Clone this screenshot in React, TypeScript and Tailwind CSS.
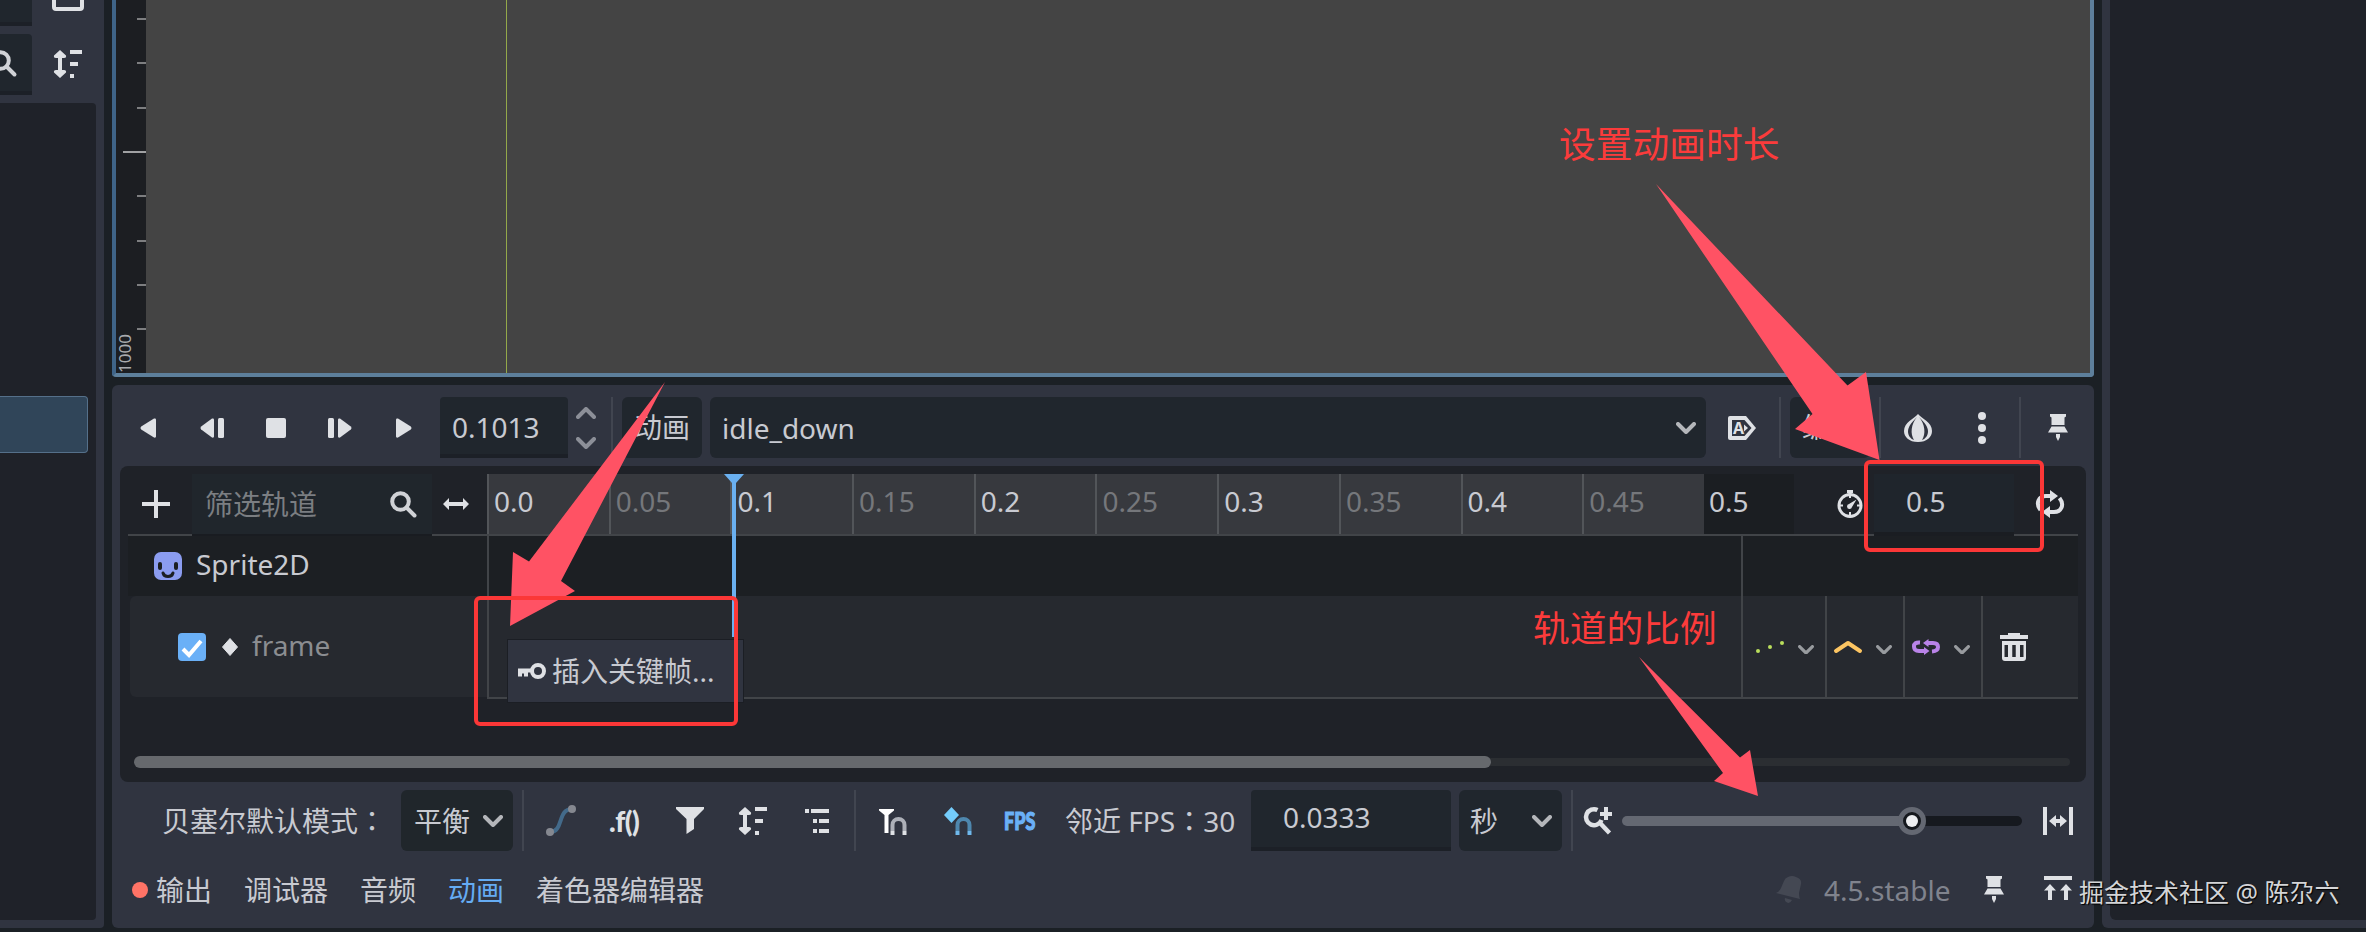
import type { ReactNode } from 'react';

const TICKS = ['0.0', '0.05', '0.1', '0.15', '0.2', '0.25', '0.3', '0.35', '0.4', '0.45'];
const RULER_GAPS = [19, 63, 108, 152, 196, 241, 285, 329];
const ICON = '#dfe1e5';

function Icon({ w, h, className = '', children }: { w: number; h: number; className?: string; children: ReactNode }) {
  return (
    <svg width={w} height={h} viewBox={`0 0 ${w} ${h}`} fill={ICON} className={`block shrink-0 overflow-visible ${className}`}>
      {children}
    </svg>
  );
}

function Chevron({ w = 20, color = '#b4b6ba', className = '', up = false }: { w?: number; color?: string; className?: string; up?: boolean }) {
  return (
    <svg width={w} height={w * 0.6} viewBox="0 0 20 12" fill="none" stroke={color} strokeWidth="4" strokeLinecap="round" strokeLinejoin="round" className={`block shrink-0 ${className}`}>
      <path d={up ? 'M2 10 10 2l8 8' : 'M2 2l8 8 8-8'} />
    </svg>
  );
}

function Separator({ className = '' }: { className?: string }) {
  return <div className={`w-0.5 self-stretch shrink-0 bg-[#414550] ${className}`} />;
}

// Full-width colon, centred in its cell
function Colon() {
  return <span lang="zh-TW" className="font-['Noto_Sans_CJK_TC',sans-serif]">：</span>;
}

function SearchIcon({ className = '' }: { className?: string }) {
  return (
    <Icon w={27} h={27} className={className}>
      <g fill="none" stroke="#d0d2d6" strokeWidth="4" strokeLinecap="round">
        <circle cx="10.5" cy="10.5" r="8.3" />
        <path d="M17 17l7.5 7.5" />
      </g>
    </Icon>
  );
}

function SortIcon({ className = '' }: { className?: string }) {
  return (
    <Icon w={28} h={28} className={className}>
      <path d="M6 0 12 5.5Q12.6 8 10 8H8v12h2q2.6 0 2 2.5L6 28 0 22.500q-.6-2.500 2-2.500H4V8H2Q-.6 8 0 5.500z" />
      <path d="M16 0h12v4H16zM16 12h8v4h-8zM16 24h4v4h-4z" />
    </Icon>
  );
}

function PinIcon({ className = '' }: { className?: string }) {
  return (
    <Icon w={20} h={27} className={className}>
      <path d="M2 0h16v2.500l-1.500 1V11h-13V3.500L2 2.500zM3.500 12.500h13L20 18.500H0zM8 20h4v3l-2 4-2-4z" />
    </Icon>
  );
}

function LeftDock() {
  return (
    <div className="relative flex h-[928px] w-[104px] shrink-0 flex-col rounded-br bg-[#303440]">
      <div className="flex h-[26px] items-start">
        <div className="h-[26px] w-8 border-b-4 border-[#1c2027] bg-[#20262d]" />
        <Icon w={32} h={12} className="ml-5">
          <path d="M2-10V7q0 2 2 2h24q2 0 2-2V-10" fill="none" stroke={ICON} strokeWidth="4" />
        </Icon>
      </div>
      <div className="mt-2 flex h-[61px] items-center">
        <div className="flex h-[61px] w-8 items-center overflow-hidden rounded-tr border-b-4 border-[#1c2027] bg-[#20262d]">
          <SearchIcon className="-ml-[10px] mt-0.5" />
        </div>
        <SortIcon className="ml-[22px] -mt-px" />
      </div>
      <div className="mt-2 h-[817px] w-24 rounded-r bg-[#1f2229] pt-[293px]">
        <div className="h-[57px] w-[88px] rounded-r border border-l-0 border-[#55708a] bg-[#304559]" />
      </div>
    </div>
  );
}

function Viewport() {
  return (
    <div className="flex h-[377px] rounded-b-sm border-x-4 border-b-4 border-[#5d7f9b] border-l-[#3f6488]">
      <div className="relative w-[30px] shrink-0 bg-[#1c1e22]">
        {RULER_GAPS.map(y => (
          <div key={y} className={`absolute right-0 h-0.5 ${y === 152 ? 'w-[23px] bg-[#a0a1a3]' : 'w-[9px] bg-[#7d7e80]'}`} style={{ top: y - 1 }} />
        ))}
        <span className="absolute bottom-0 left-0 [writing-mode:vertical-rl] rotate-180 text-[17px] leading-[18px] text-[#a9abae]">1000</span>
      </div>
      <div className="flex-1 bg-[#444444] pl-[360px]">
        <div className="h-[373px] w-px bg-[#94a94a]" />
      </div>
    </div>
  );
}

function PlaybackBar() {
  return (
    <div className="flex h-[61px] items-center pl-7">
      <Icon w={16} h={20}><path d="M16 1.500V18.500Q16 20 14 19.500L1.200 11.500Q-.4 10 1.200 8.500L14 .5Q16 0 16 1.500z" /></Icon>
      <Icon w={24} h={20} className="ml-11"><path d="M14 1.500V18.500Q14 20 12 19.500L1.200 11.500Q-.4 10 1.200 8.500L12 .5Q14 0 14 1.500z" /><rect x="18" width="6" height="20" rx="1.500" /></Icon>
      <Icon w={20} h={20} className="ml-[42px]"><rect width="20" height="20" rx="2" /></Icon>
      <Icon w={24} h={20} className="ml-[42px]"><rect width="6" height="20" rx="1.500" /><path d="M10 1.500V18.500Q10 20 12 19.500L22.800 11.500Q24.400 10 22.800 8.500L12 .5Q10 0 10 1.500z" /></Icon>
      <Icon w={16} h={20} className="ml-11"><path d="M0 1.500V18.500Q0 20 2 19.500L14.800 11.500Q16.400 10 14.800 8.500L2 .5Q0 0 0 1.500z" /></Icon>
      <div className="ml-7 h-[61px] w-32 shrink-0 rounded-t border-b-4 border-[#1c2027] bg-[#20262d] pl-3 leading-[61px]">0.1013</div>
      <div className="ml-2 flex flex-col gap-[18px]">
        <Chevron up color="#8c8f98" />
        <Chevron color="#8c8f98" />
      </div>
      <Separator className="ml-[15px]" />
      <div className="ml-[9px] h-[61px] w-20 shrink-0 rounded-md bg-[#20262d] text-center leading-[61px]">动画</div>
      <div className="ml-2 flex h-[61px] w-[996px] shrink-0 items-center justify-between rounded-md bg-[#20262d] pl-3 pr-2.5">
        idle_down
        <Chevron />
      </div>
      <div className="relative ml-[22px] h-6 w-7 shrink-0">
        <Icon w={28} h={24}>
          <path d="M2 0H18L28 12 18 24H2Q0 24 0 22V2Q0 0 2 0z" />
          <path d="M4 4H16.500L23.500 12 16.500 20H4z" fill="#303440" />
          <path d="M16 8.500 20 12l-4 3.500z" />
        </Icon>
        <span className="absolute left-[5px] top-[4px] text-[16px] font-bold leading-4 text-[#dfe1e5]">A</span>
      </div>
      <Separator className="ml-[23px]" />
      <div className="ml-[9px] h-[61px] w-20 shrink-0 rounded-md bg-[#20262d] text-center leading-[61px]">编辑</div>
      <Separator className="ml-[9px]" />
      <Icon w={28} h={28} className="ml-[23px]">
        <path d="M14 0C18 5 28 8 28 17 28 23 23 28 14 28S0 23 0 17C0 8 10 5 14 0z" />
        <path d="M13 3C7 9 4 13 4 17.500 4 22 7 25 10 26 6 20 7 10 13 3zM15 3c6 6 9 10 9 14.500C24 22 21 25 18 26 22 20 21 10 15 3z" fill="#303440" />
      </Icon>
      <Icon w={8} h={32} className="ml-[46px]"><circle cx="4" cy="4" r="4" /><circle cx="4" cy="16" r="4" /><circle cx="4" cy="28" r="4" /></Icon>
      <Separator className="ml-[33px]" />
      <PinIcon className="ml-[27px]" />
    </div>
  );
}

function TimelineHeader() {
  return (
    <div className="flex h-[62px] items-start border-b-2 border-[#414448]">
      <div className="flex h-[60px] w-[359px] shrink-0 items-center pl-3.5">
        <Icon w={28} h={28}><path d="M12 0h4v12h12v4H16v12h-4V16H0v-4h12z" /></Icon>
        <div className="relative top-px ml-[22px] flex h-[62px] w-60 items-center justify-between border-b-2 border-[#191c21] bg-[#20262c] pl-[13px] pr-[15px] text-[#7b7e82]">
          筛选轨道
          <SearchIcon />
        </div>
        <Icon w={26} h={12} className="ml-[11px]"><path d="M6 0v4h14V0l6 6-6 6V8H6v4L0 6z" /></Icon>
      </div>
      <div className="grid h-[60px] w-[1217px] shrink-0 grid-cols-10 bg-[#37393e]">
        {TICKS.map((t, i) => (
          <div key={t} className={`border-l-2 border-[#525559] pl-[5px] leading-[55px] ${i % 2 ? 'text-[#75777b]' : ''}`}>{t}</div>
        ))}
      </div>
      <div className="h-[60px] w-[90px] shrink-0 bg-[#1b1e22] pl-[5px] leading-[55px]">0.5</div>
      <Icon w={26} h={28} className="ml-[43px] mt-4">
        <circle cx="13" cy="15.500" r="11" fill="none" stroke={ICON} strokeWidth="3" />
        <path d="M10 0h6v3h-6zM11.500 2h3v3h-3zM19.500 9.500 15 17a2.500 2.500 0 1 1-3-3zM2 14.500h4v2H2zM20 14.500h4v2h-4zM12 22h2v4h-2zM12 5h2v3h-2z" />
      </Icon>
      <div className="ml-[11px] h-[62px] w-[140px] shrink-0 border-b-4 border-[#1a1d22] bg-[#1f252c] pl-8 leading-[55px]">0.5</div>
      <Icon w={28} h={28} className="ml-[22px] mt-4">
        <g fill="none" stroke={ICON} strokeWidth="4">
          <path d="M4.500 20C-1 13 3 6 10 6h5" />
          <path d="M23.500 8C29 15 25 22 18 22h-5" />
        </g>
        <path d="M14 0 22 6l-8 6zM14 16v12l-8-6z" />
      </Icon>
    </div>
  );
}

function TrackRows() {
  const cell = 'flex items-center border-l-2 border-[#414448]';
  return (
    <>
      <div className="flex h-[60px] bg-[#1c1f23]">
        <div className="flex w-[359px] shrink-0 items-center pl-[26px]">
          <Icon w={28} h={28}>
            <rect width="28" height="28" rx="7" fill="#8b9cf0" />
            <rect x="4" y="10" width="4" height="8" rx="2" fill="#1c1f23" />
            <rect x="20" y="10" width="4" height="8" rx="2" fill="#1c1f23" />
            <path d="M9 21q1 3.500 5 3.500t5-3.500" fill="none" stroke="#1c1f23" strokeWidth="3" strokeLinecap="round" />
          </Icon>
          <span className="ml-3.5 leading-none -mt-[5px]">Sprite2D</span>
        </div>
        <div className="w-[1254px] shrink-0 border-l-2 border-[#414448]" />
        <div className="border-l-2 border-[#414448]" />
      </div>
      <div className="flex h-[103px]">
        <div className="ml-0.5 mb-0.5 flex w-[357px] shrink-0 items-center rounded-l-md bg-[#26292f] pl-12">
          <Icon w={28} h={28}>
            <rect width="28" height="28" rx="4" fill="#6ab0f7" />
            <path d="M5 16l6 6L23 8" fill="none" stroke="#fff" strokeWidth="4" />
          </Icon>
          <Icon w={16} h={18} className="ml-4"><path d="M8 .5 15.500 9 8 17.500.5 9z" strokeWidth="1" stroke={ICON} strokeLinejoin="round" /></Icon>
          <span className="ml-3.5 -mt-1 leading-none text-[#8b8d91]">frame</span>
        </div>
        <div className="flex flex-1 border-b-2 border-[#414448] bg-[#26292f]">
          <div className="w-[1254px] shrink-0 border-l-2 border-[#414448]" />
          <div className={`${cell} w-[84px] pl-[13px]`}>
            <Icon w={24} h={12}><g fill="#bade5c"><circle cx="2" cy="10" r="2" /><circle cx="14" cy="6" r="2" /><circle cx="26" cy="2" r="2" /></g></Icon>
            <Chevron w={16} color="#989b9f" className="ml-[18px] mt-1.5" />
          </div>
          <div className={`${cell} w-[78px] pl-[7px]`}>
            <Icon w={28} h={12}><path d="M2 10 14 2l12 8" fill="none" stroke="#fcc562" strokeWidth="4" strokeLinecap="round" strokeLinejoin="round" /></Icon>
            <Chevron w={16} color="#989b9f" className="ml-3.5 mt-1.5" />
          </div>
          <div className={`${cell} w-[78px] pl-[7px]`}>
            <Icon w={28} h={16}>
              <g fill="none" stroke="#b983e8" strokeWidth="4">
                <path d="M8 3.500Q2 3 2 7.500T7 12h5" />
                <path d="M16 4h5q5 0 5 4t-6 4.500" />
              </g>
              <path d="M12 8l5.500 4-5.500 4zM16.500 0 11 4l5.500 4z" fill="#b983e8" />
            </Icon>
            <Chevron w={16} color="#989b9f" className="ml-3.5 mt-1.5" />
          </div>
          <div className={`${cell} flex-1 pl-[17px]`}>
            <Icon w={28} h={28}>
              <path d="M8 0h12v2h8v4H0V2h8z" />
              <path d="M2 8h24v17q0 3-3 3H5q-3 0-3-3zM4.500 12v12H8V12zM12.250 12v12h3.500V12zM20 12v12h3.500V12z" fillRule="evenodd" />
            </Icon>
          </div>
        </div>
      </div>
    </>
  );
}

function TrackEditor() {
  return (
    <div className="relative mx-2 mt-2 h-[316px] rounded-lg bg-[#1f2228] px-2 pt-2">
      <TimelineHeader />
      <TrackRows />
      <div className="ml-1.5 mr-2 mt-[57px] flex h-3 items-center">
        <div className="z-10 h-3 w-[1357px] rounded-full bg-[#66696d]" />
        <div className="-ml-1.5 h-2 flex-1 rounded-r-full bg-[#2b2e32]" />
      </div>

      {/* Playhead */}
      <Icon w={20} h={163} className="absolute left-[604px] top-2">
        <path d="M0 0h20l-8 9v154H8V9z" fill="#6ab0f0" />
      </Icon>

      {/* Context menu */}
      <div className="absolute left-[388px] top-[174px] flex h-[62px] w-[235px] items-center bg-[#303440] pl-2.5 shadow-[0_0_0_1px_#1b1e24]">
        <Icon w={28} h={16}>
          <circle cx="20" cy="8" r="6" fill="none" stroke={ICON} strokeWidth="4" />
          <path d="M0 6h13v4h-3v4H6v-3H4v3H0z" transform="translate(0 -.5)" />
        </Icon>
        <span className="ml-1.5 whitespace-nowrap">插入关键帧...</span>
      </div>
    </div>
  );
}

function OptionsBar() {
  return (
    <div className="mt-2 flex h-[61px] items-center whitespace-nowrap pl-[50px]">
      <span className="w-[239px] shrink-0">贝塞尔默认模式<Colon /></span>
      <div className="flex h-[61px] w-28 shrink-0 items-center justify-between rounded-md bg-[#20262b] pl-[13px] pr-2.5">
        平衡
        <Chevron />
      </div>
      <Separator className="ml-[9px]" />
      <Icon w={30} h={31} className="ml-[22px]">
        <path d="M4 27C18 27 11 4 26 4" fill="none" stroke="#436a8a" strokeWidth="4" />
        <circle cx="4" cy="27" r="4" fill="#858890" />
        <circle cx="26" cy="4" r="4" fill="#858890" />
      </Icon>
      <span className="ml-[33px] w-[34px] shrink-0 font-['Lato'] text-[28px] font-black leading-none tracking-[-0.5px] text-[#dfe1e5]">.f()</span>
      <Icon w={28} h={27} className="ml-[33px]"><path d="M0 0h28v2L18 12v10l-7.500 5V12L0 2z" /></Icon>
      <SortIcon className="ml-[35px]" />
      <Icon w={24} h={28} className="ml-[38px]">
        <path d="M0 2h4v4H0zM6 2h18v4H6zM8 12h4v4H8zM14 12h10v4H14zM8 22h4v4H8zM14 22h10v4H14z" />
      </Icon>
      <Separator className="ml-[25px]" />
      <Icon w={28} h={28} className="ml-[23px]">
        <path d="M0 2h15v1.500L9.500 8v18h-4V8L0 3.500z" fill="#fff" />
        <path d="M13.500 24V18a6 6 0 0 1 12 0v6" fill="none" stroke="#adb0b8" strokeWidth="4" />
        <path d="M11.500 24h4v4h-4zM23.500 24h4v4h-4z" />
      </Icon>
      <Icon w={28} h={28} className="ml-[37px]">
        <path d="M7.500 0 15 8 7.500 16 0 8z" fill="#74ccfb" />
        <path d="M13.500 24V18a6 6 0 0 1 12 0v6" fill="none" stroke="#4e87ae" strokeWidth="4" />
        <path d="M11.500 24h4v4h-4zM23.500 24h4v4h-4z" fill="#6fb8ec" />
      </Icon>
      <span className="ml-8 w-[33px] shrink-0 origin-left scale-x-[.72] font-['Lato'] text-[25px] font-black leading-none text-[#6ab0f7] [-webkit-text-stroke:1.2px_#6ab0f7]">FPS</span>
      <span className="ml-7 w-[186px] shrink-0">邻近 FPS<Colon />30</span>
      <div className="h-[61px] w-[200px] shrink-0 rounded-t border-b-4 border-[#1c2027] bg-[#20262d] pl-8 leading-[55px]">0.0333</div>
      <div className="ml-2 flex h-[61px] w-[103px] shrink-0 items-center justify-between rounded-md bg-[#20262d] pl-[11px] pr-2.5">
        秒
        <Chevron />
      </div>
      <Separator className="ml-[9px]" />
      <Icon w={28} h={28} className="ml-[11px]">
        <path d="M13.500 3A8 8 0 1 0 17.500 13" fill="none" stroke={ICON} strokeWidth="4.500" />
        <path d="M16 16l9.500 10" stroke={ICON} strokeWidth="4.500" />
        <path d="M20 0h4v5h4v4h-4v4h-4V9h-4V5h4z" />
      </Icon>
      <div className="ml-2.5 flex w-[400px] shrink-0 items-center">
        <div className="h-2.5 w-[290px] rounded-l-full bg-[#646872]" />
        <div className="z-10 -ml-3.5 flex size-7 shrink-0 items-center justify-center rounded-full border-[5px] border-[#646872] bg-[#15181d]">
          <div className="size-3 shrink-0 rounded-full bg-[#eeeff1]" />
        </div>
        <div className="-ml-3.5 h-2.5 flex-1 rounded-r-full bg-[#16191f]" />
      </div>
      <Icon w={30} h={28} className="ml-[21px]">
        <path d="M0 0h4v28H0zM26 0h4v28h-4z" />
        <path d="M13 8v4h4V8l7 6-7 6v-4h-4v4l-7-6z" />
      </Icon>
    </div>
  );
}

function BottomTabs() {
  return (
    <div className="flex h-[77px] items-center justify-between whitespace-nowrap pl-5 pr-[22px]">
      <div className="flex items-center gap-8">
        <span className="flex items-center gap-2">
          <span className="size-4 rounded-full bg-[#ff7366]" />
          输出
        </span>
        <span>调试器</span>
        <span>音频</span>
        <span className="text-[#65acf3]">动画</span>
        <span>着色器编辑器</span>
      </div>
      <div className="flex items-center">
        <Icon w={26} h={28}>
          <path d="M12 1Q16-1 20 1 26 3 25 8L23 17q0 4 1 6L0 17q4-2 5-5L8 5Q9 2 12 1zM9 22l7 2q-2 4-5 2.500T9 22z" fill="#444853" />
        </Icon>
        <span className="ml-[22px] w-[160px] text-[#80838d]">4.5.stable</span>
        <PinIcon />
        <Icon w={28} h={27} className="ml-10">
          <path d="M0 0h28v4H0zM6 8l6 6.500H8V24H4v-9.500H0zM22 8l6 6.500H24V24h-4v-9.500h-4z" />
        </Icon>
      </div>
    </div>
  );
}

function Annotations() {
  return (
    <>
      <svg width="2366" height="932" className="pointer-events-none absolute left-0 top-0">
        <g fill="#ff5264">
          <path d="M665 382 529 561.500 513 552 510 626 575 591 561 581z" />
          <path d="M1656 184 1847.500 385.500 1866 372 1879.500 460 1795 429 1812.500 414z" />
          <path d="M1639 657 1740 757.500 1750 750 1758 796 1714 781 1723 773z" />
        </g>
        <g fill="none" stroke="#fb3737" strokeWidth="4">
          <rect x="476" y="598" width="260" height="126" rx="4" />
          <rect x="1866" y="462" width="176" height="88" rx="4" />
        </g>
      </svg>
      <span className="absolute left-[1559px] top-[119px] whitespace-nowrap text-[36.750px] leading-[50px] text-[#fb3b3b]">设置动画时长</span>
      <span className="absolute left-[1533px] top-[603px] whitespace-nowrap text-[36.750px] leading-[50px] text-[#fb3b3b]">轨道的比例</span>
      <span className="absolute left-[2079px] top-[874px] whitespace-nowrap text-[25px] leading-[36px] text-[#d4d5d7] [text-shadow:1px_1px_1px_#000]">掘金技术社区 @ 陈尕六</span>
    </>
  );
}

export default function App() {
  return (
    <div className="relative flex h-[932px] w-[2366px] overflow-hidden bg-[#1b2025] font-['Noto_Sans','Noto_Sans_CJK_SC',sans-serif] text-[28px] text-[#c8cad1]">
      <LeftDock />
      <main className="ml-2 w-[1982px] shrink-0">
        <Viewport />
        <div className="mt-2 h-[543px] rounded-md bg-[#303440] pt-3">
          <PlaybackBar />
          <TrackEditor />
          <OptionsBar />
          <BottomTabs />
        </div>
      </main>
      <div className="ml-2 h-[928px] flex-1 rounded-bl-md bg-[#303440] pl-2">
        <div className="h-[920px] rounded-bl-md bg-[#1f2229]" />
      </div>
      <Annotations />
    </div>
  );
}
